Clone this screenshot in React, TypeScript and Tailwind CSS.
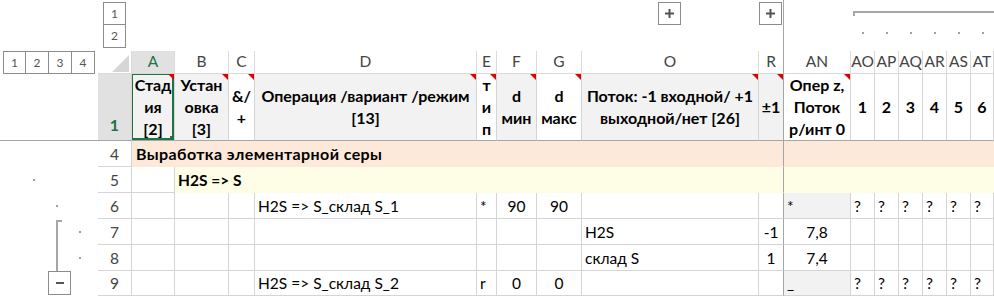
import React from 'react'

type CellProps = {
  className?: string
  edge?: string
  tri?: boolean
  children?: React.ReactNode
}

const GRID = 'border-r border-b border-[#d4d4d4]'
const FROZEN_R = 'border-r border-b border-r-[#a6a6a6] border-b-[#d4d4d4]'

function Cell({ className = '', edge = GRID, tri, children }: CellProps) {
  return (
    <div className={`relative flex min-w-0 overflow-hidden whitespace-nowrap ${edge} ${className}`}>
      {children}
      {tri && (
        <span className="absolute right-0 top-0 h-0 w-0 border-l-[6px] border-t-[6px] border-l-transparent border-t-[#e00000]" />
      )}
    </div>
  )
}

function LevelBtn({ children, className = '' }: { children: React.ReactNode; className?: string }) {
  return (
    <div className={`flex h-[23px] w-[23px] items-center justify-center border border-[#8c8c8c] bg-white text-[12px] text-[#555] ${className}`}>
      {children}
    </div>
  )
}

function PlusBtn() {
  return (
    <div className="flex h-[23px] w-[23px] items-center justify-center border border-[#8c8c8c] bg-white">
      <svg width="9" height="9" viewBox="0 0 9 9">
        <path d="M4.5 0v9M0 4.5h9" stroke="#555" strokeWidth="2" />
      </svg>
    </div>
  )
}

function Dot({ className = '' }: { className?: string }) {
  return <span className={`block h-[2px] w-[2px] bg-[#a0a0a0] ${className}`} />
}

const COLS = ['A', 'B', 'C', 'D', 'E', 'F', 'G', 'O', 'R', 'AN', 'AO', 'AP', 'AQ', 'AR', 'AS', 'AT']

type V = { t: string; c?: boolean; g?: boolean }
const q: V = { t: '?' }

const rows: { n: number; v: Record<string, V> }[] = [
  {
    n: 6,
    v: {
      D: { t: 'H2S => S_склад S_1' },
      E: { t: '*' },
      F: { t: '90', c: true },
      G: { t: '90', c: true },
      AN: { t: '*', g: true },
      AO: q, AP: q, AQ: q, AR: q, AS: q, AT: q,
    },
  },
  { n: 7, v: { O: { t: 'H2S' }, R: { t: '-1', c: true }, AN: { t: '7,8', c: true } } },
  { n: 8, v: { O: { t: 'склад S' }, R: { t: '1', c: true }, AN: { t: '7,4', c: true } } },
  {
    n: 9,
    v: {
      D: { t: 'H2S => S_склад S_2' },
      E: { t: 'r' },
      F: { t: '0', c: true },
      G: { t: '0', c: true },
      AN: { t: '_', g: true },
      AO: q, AP: q, AQ: q, AR: q, AS: q, AT: q,
    },
  },
]

function Gutter({ n }: { n: number }) {
  if (n === 6)
    return (
      <div className="flex items-center pl-[56px]">
        <Dot />
      </div>
    )
  if (n === 7)
    return (
      <div className="flex">
        <div className="ml-[56px] mt-[1px] w-[6px] border-l-2 border-t-2 border-[#a6a6a6]" />
        <div className="ml-[17px] flex items-center">
          <Dot />
        </div>
      </div>
    )
  if (n === 8)
    return (
      <div className="flex">
        <div className="ml-[56px] w-[2px] bg-[#a6a6a6]" />
        <div className="ml-[21px] flex items-center">
          <Dot />
        </div>
      </div>
    )
  return (
    <div className="pl-[48px]">
      <div className="flex h-[24px] w-[23px] items-center justify-center border border-[#8c8c8c] bg-white">
        <span className="block h-[2px] w-[8px] bg-[#555]" />
      </div>
    </div>
  )
}

const HEAD = 'border-r border-b border-r-[#d4d4d4] border-b-[#a6a6a6]'
const hcell = 'items-center justify-center text-center text-[16px] font-bold leading-[22px]'
const txt = 'items-end pb-[3px] text-[15.5px] leading-[18px]'

export default function App() {
  return (
    <div className="h-[296px] w-[994px] overflow-hidden bg-white text-black [font-family:Lato,sans-serif]">
      <div className="grid grid-cols-[98px_34px_43px_54px_26px_222px_20px_40px_45px_177px_25px_67px_24px_24px_24px_24px_24px_23px] grid-rows-[51px_23px_67px_26px_26px_26px_26px_26px_25px]">
        {/* column outline */}
        <div />
        <div className="flex flex-col pl-[5px] pt-[2px]">
          <LevelBtn>1</LevelBtn>
          <LevelBtn className="border-t-0">2</LevelBtn>
        </div>
        <div className="col-span-7" />
        <div className="pl-[76px] pt-[2px]">
          <PlusBtn />
        </div>
        <div className="border-r border-[#a6a6a6] pt-[2px]">
          <PlusBtn />
        </div>
        <div />
        <div className="col-span-6 flex flex-col">
          <div className="ml-[2px] mt-[11px] h-[5px] border-l-2 border-t-2 border-[#a6a6a6]" />
          <div className="mt-[16px] grid grid-cols-[24px_24px_24px_24px_24px_23px]">
            {[0, 1, 2, 3, 4, 5].map(i => (
              <div key={i} className="flex justify-center">
                <Dot />
              </div>
            ))}
          </div>
        </div>

        {/* column headers */}
        <div className="flex pl-[3px]">
          <LevelBtn>1</LevelBtn>
          <LevelBtn className="border-l-0">2</LevelBtn>
          <LevelBtn className="border-l-0">3</LevelBtn>
          <LevelBtn className="border-l-0">4</LevelBtn>
        </div>
        <Cell edge="border-r border-b border-[#dadada]" className="items-end justify-end pb-[1px] pr-[2px]">
          <span className="h-0 w-0 border-b-[17px] border-l-[17px] border-b-[#d6d6d6] border-l-transparent" />
        </Cell>
        {COLS.map(c => (
          <Cell
            key={c}
            edge={c === 'R' ? 'border-r border-b border-r-[#a6a6a6] border-b-[#dadada]' : 'border-r border-b border-[#dadada]'}
            className={`items-center justify-center text-[15.5px] ${c === 'A' ? 'bg-[#e1e1e1] text-[#217346]' : 'text-[#444]'}`}
          >
            {c}
          </Cell>
        ))}

        {/* row 1 */}
        <div className="border-b border-[#a6a6a6]" />
        <Cell edge={HEAD} className="items-end justify-center bg-[#e1e1e1] pb-[3px] text-[16px] font-bold text-[#217346]">
          1
        </Cell>
        <Cell edge={HEAD} tri className={`${hcell} bg-[#f2f2f2]`}>
          <div className="relative flex h-full w-full items-center justify-center">
            <span>Стад<br />ия<br />[2]</span>
            <span className="absolute -left-px -top-px bottom-0 right-0 border-2 border-[#217346]" />
            <span className="absolute -bottom-px -right-px h-[5px] w-[5px] bg-[#217346]" />
          </div>
        </Cell>
        <Cell edge={HEAD} tri className={`${hcell} bg-[#f2f2f2]`}>
          <span>Устан<br />овка<br />[3]</span>
        </Cell>
        <Cell edge={HEAD} tri className={hcell}>
          <span>&amp;/<br />+</span>
        </Cell>
        <Cell edge={HEAD} tri className={`${hcell} bg-[#f2f2f2]`}>
          <span>Операция /вариант /режим<br />[13]</span>
        </Cell>
        <Cell edge={HEAD} tri className={hcell}>
          <span>т<br />и<br />п</span>
        </Cell>
        <Cell edge={HEAD} tri className={`${hcell} bg-[#f2f2f2]`}>
          <span>d<br />мин</span>
        </Cell>
        <Cell edge={HEAD} tri className={hcell}>
          <span>d<br />макс</span>
        </Cell>
        <Cell edge={HEAD} tri className={`${hcell} bg-[#f2f2f2]`}>
          <span>Поток: -1 входной/ +1<br />выходной/нет [26]</span>
        </Cell>
        <Cell edge="border-r border-b border-[#a6a6a6]" tri className={`${hcell} bg-[#f2f2f2]`}>
          ±1
        </Cell>
        <Cell edge={HEAD} tri className={hcell}>
          <span>Опер z,<br />Поток<br />р/инт 0</span>
        </Cell>
        {['1', '2', '3', '4', '5', '6'].map(d => (
          <Cell key={d} edge={HEAD} className={hcell}>
            {d}
          </Cell>
        ))}

        {/* row 4 */}
        <div />
        <Cell className={`${txt} justify-center text-[#444]`}>4</Cell>
        <Cell
          edge="border-r border-b border-r-[#a6a6a6] border-b-[#fde9d9]"
          className={`${txt} col-span-9 bg-[#fde9d9] pl-[4px] font-bold tracking-[0.4px] text-[16px]`}
        >
          Выработка элементарной серы
        </Cell>
        <Cell edge="border-b border-[#fde9d9]" className="col-span-7 bg-[#fde9d9]" />

        {/* row 5 */}
        <div className="flex items-center pl-[33px]">
          <Dot />
        </div>
        <Cell className={`${txt} justify-center text-[#444]`}>5</Cell>
        <Cell />
        <Cell
          edge="border-r border-b border-r-[#a6a6a6] border-b-[#fefee6]"
          className={`${txt} col-span-8 bg-[#fefee6] pl-[3px] font-bold`}
        >
          H2S =&gt; S
        </Cell>
        <Cell edge="border-b border-[#fefee6]" className="col-span-7 bg-[#fefee6]" />

        {/* rows 6-9 */}
        {rows.map(r => (
          <React.Fragment key={r.n}>
            <Gutter n={r.n} />
            <Cell className={`${txt} justify-center text-[#444]`}>{r.n}</Cell>
            {COLS.map(c => {
              const v = r.v[c]
              return (
                <Cell
                  key={c}
                  edge={c === 'R' ? FROZEN_R : GRID}
                  className={`${txt} ${v?.c ? 'justify-center' : 'pl-[3px]'} ${v?.g ? 'bg-[#f2f2f2]' : ''}`}
                >
                  {v?.t}
                </Cell>
              )
            })}
          </React.Fragment>
        ))}
      </div>
    </div>
  )
}
